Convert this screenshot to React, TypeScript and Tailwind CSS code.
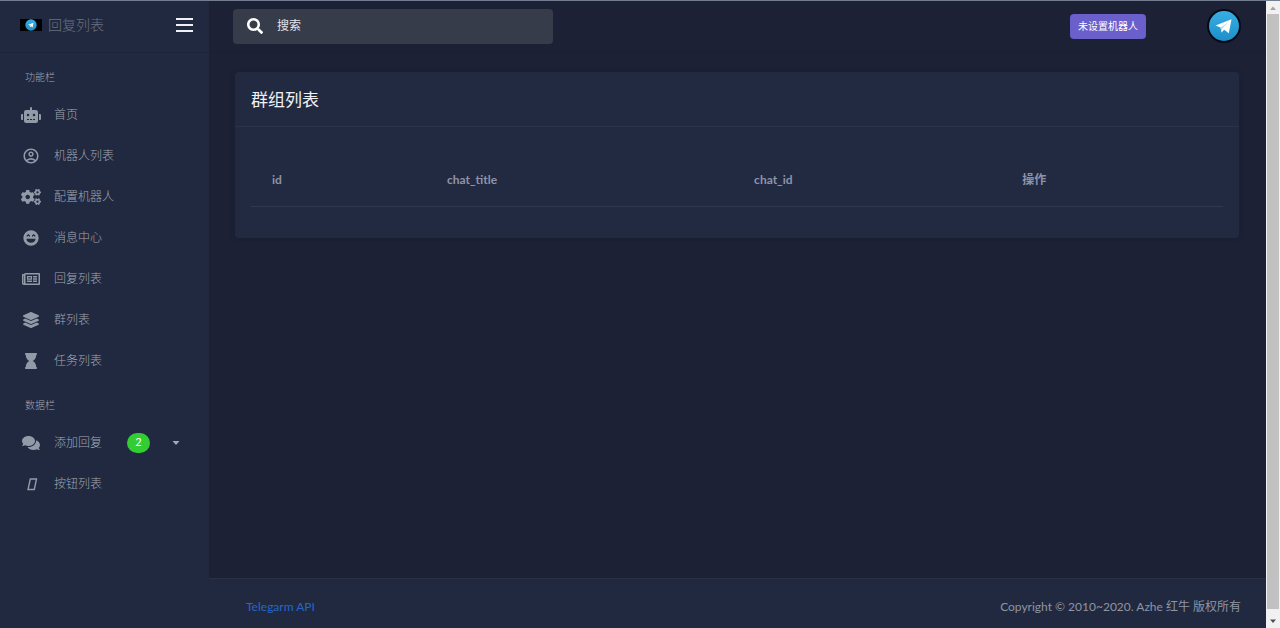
import type { ReactNode } from "react";
import { FaCogs, FaComments, FaHourglass, FaLayerGroup, FaRegNewspaper, FaRobot, FaSearch } from "react-icons/fa";
import { MdOutlineAccountCircle } from "react-icons/md";

type Item = { label: string; icon: ReactNode; badge?: number };

function HappyIcon() {
  return (
    <svg viewBox="0 0 24 24" className="size-4" fill="currentColor" aria-hidden="true">
      <path
        fillRule="evenodd"
        d="M12 .5a11.500 11.500 0 1 0 0 23 11.500 11.500 0 0 0 0-23ZM5.500 10.500V8.200L8 6l2.500 2.200v2.300L8 8.800ZM13.500 10.500V8.200L16 6l2.500 2.200v2.300L16 8.800ZM5 13.200h14c-.5 3.800-3.300 6-7 6s-6.500-2.200-7-6Z"
      />
    </svg>
  );
}

function SlantIcon() {
  return (
    <svg viewBox="0 0 16 16" className="size-4" fill="none" stroke="currentColor" strokeWidth="1.4" aria-hidden="true">
      <path d="M7.300 3h6.200L11.300 13.500H5Z" />
    </svg>
  );
}

function TelegramMark({ className, ring }: { className: string; ring?: boolean }) {
  return (
    <svg viewBox="0 0 36 36" className={className} aria-hidden="true">
      <defs>
        <linearGradient id={ring ? "sky-lg" : "sky-sm"} x1="0" y1="0" x2="0" y2="1">
          <stop offset="0" stopColor="#38aee3" />
          <stop offset="1" stopColor="#1e8fc9" />
        </linearGradient>
      </defs>
      {ring && <circle cx="18" cy="18" r="17" fill="#050a16" />}
      <circle cx="18" cy="18" r={ring ? 15 : 17} fill={ring ? "url(#sky-lg)" : "url(#sky-sm)"} />
      <path d="M9.500 17.500 25.500 11.300 22.800 25.200 18.200 21.700 15.500 24.500 14.600 19.500Z" fill="#fff" />
      <path d="M14.600 19.500 22.500 14 16.400 20.600 15.500 24.500Z" fill="#c6dbe9" />
    </svg>
  );
}

const features: Item[] = [
  { label: "首页", icon: <FaRobot className="size-5" /> },
  { label: "机器人列表", icon: <MdOutlineAccountCircle className="size-[18px]" /> },
  { label: "配置机器人", icon: <FaCogs className="size-5" /> },
  { label: "消息中心", icon: <HappyIcon /> },
  { label: "回复列表", icon: <FaRegNewspaper className="size-[18px]" /> },
  { label: "群列表", icon: <FaLayerGroup className="size-4" /> },
  { label: "任务列表", icon: <FaHourglass className="size-4" /> },
];

const data: Item[] = [
  { label: "添加回复", icon: <FaComments className="size-[18px]" />, badge: 2 },
  { label: "按钮列表", icon: <SlantIcon /> },
];

function NavSection({ title, items }: { title: string; items: Item[] }) {
  return (
    <section>
      <h2 className="px-[25px] pt-3.5 pb-[7px] text-[10px] leading-5">{title}</h2>
      <ul>
        {items.map((item) => (
          <li key={item.label}>
            <a href="#" className="flex h-[41px] items-center pl-[21px] text-xs">
              <span className="mr-[13px] flex w-5 justify-center text-[#929aa8]">{item.icon}</span>
              {item.label}
              {item.badge !== undefined && (
                <>
                  <span className="ml-[25px] flex h-5 w-[23px] items-center justify-center rounded-full bg-[#32cd32] text-[11px] font-normal text-white">
                    {item.badge}
                  </span>
                  <svg viewBox="0 0 8 4" className="ml-[22px] h-1 w-2" fill="#a4aab5" aria-hidden="true">
                    <path d="M.5 0h7L4 4Z" />
                  </svg>
                </>
              )}
            </a>
          </li>
        ))}
      </ul>
    </section>
  );
}

export default function App() {
  return (
    <div className="flex min-h-screen border-t border-[#737d90] bg-[#1c2136] font-['Lato','Noto_Sans_CJK_SC',sans-serif] text-[#8f95a3]">
      <aside className="w-[209px] shrink-0 bg-[#212940] font-light text-[#a0a5b0]">
        <div className="flex h-[52px] items-center border-b border-[#1d2338] pr-4 pb-1 pl-5">
          <span className="flex h-3 w-[22px] items-center justify-center bg-black">
            <TelegramMark className="size-3" />
          </span>
          <span className="ml-1.5 text-sm text-[#6a707f]">回复列表</span>
          <button aria-label="切换菜单" className="ml-auto flex w-[17px] flex-col gap-1">
            <span className="h-0.5 bg-[#eef0f4]" />
            <span className="h-0.5 bg-[#eef0f4]" />
            <span className="h-0.5 bg-[#eef0f4]" />
          </button>
        </div>
        <nav>
          <NavSection title="功能栏" items={features} />
          <NavSection title="数据栏" items={data} />
        </nav>
      </aside>

      <div className="flex min-w-0 flex-1 flex-col">
        <header className="flex h-[51px] items-center border-b border-[#1a1f33] pr-6 pl-6">
          <label className="flex h-[35px] w-80 items-center rounded bg-[#373c4b] px-3.5 text-white">
            <FaSearch className="size-4 shrink-0" aria-hidden="true" />
            <input
              type="search"
              aria-label="搜索"
              placeholder="搜索"
              className="ml-3.5 w-full bg-transparent text-xs outline-none placeholder:text-[#e4e6ea]"
            />
          </label>
          <button className="mr-[60px] ml-auto h-[25px] rounded-sm bg-[#6a5fcb] px-2 text-[10px] text-white">
            未设置机器人
          </button>
          <button aria-label="账户">
            <TelegramMark ring className="size-9" />
          </button>
        </header>

        <main className="flex-1 py-5 pr-[27px] pl-[26px]">
          <section className="rounded-sm bg-[#222a42] shadow-[0_0_4px_#191e30]">
            <h1 className="border-b border-[#2b334b] px-4 pt-3.5 pb-3 text-[17px] leading-7 text-[#f0f1f5]">群组列表</h1>
            <div className="px-4 pt-7 pb-[31px]">
              <table className="w-full table-fixed border-b border-[#30374f] text-left text-xs text-[#8e94a8]">
                <thead>
                  <tr className="h-[51px]">
                    <th className="w-[18%] pl-[21px] font-bold">id</th>
                    <th className="w-[31.600%] pl-[21px] font-bold">chat_title</th>
                    <th className="w-[27.600%] pl-[21px] font-bold">chat_id</th>
                    <th className="pl-[21px] font-bold">操作</th>
                  </tr>
                </thead>
              </table>
            </div>
          </section>
        </main>

        <footer className="flex h-[50px] items-center justify-between border-t border-[#292f45] bg-[#212940] px-[25px] pt-1.5 text-xs">
          <a href="#" className="pl-3 text-[#2467c8]">Telegarm API</a>
          <p>Copyright © 2010~2020. Azhe 红牛 版权所有</p>
        </footer>
      </div>

      <div className="flex w-3.5 shrink-0 flex-col items-center bg-[#f1f1f1]" aria-hidden="true">
        <svg viewBox="0 0 14 13" className="h-[13px] w-3.5" fill="#a3a3a3">
          <path d="M4 9 7 5.500 10 9Z" />
        </svg>
        <div className="w-3 flex-1 bg-[#c1c1c1]" />
        <svg viewBox="0 0 14 19" className="h-[19px] w-3.5" fill="#505050">
          <path d="M4 10.500H10L7 14Z" />
        </svg>
      </div>
    </div>
  );
}
